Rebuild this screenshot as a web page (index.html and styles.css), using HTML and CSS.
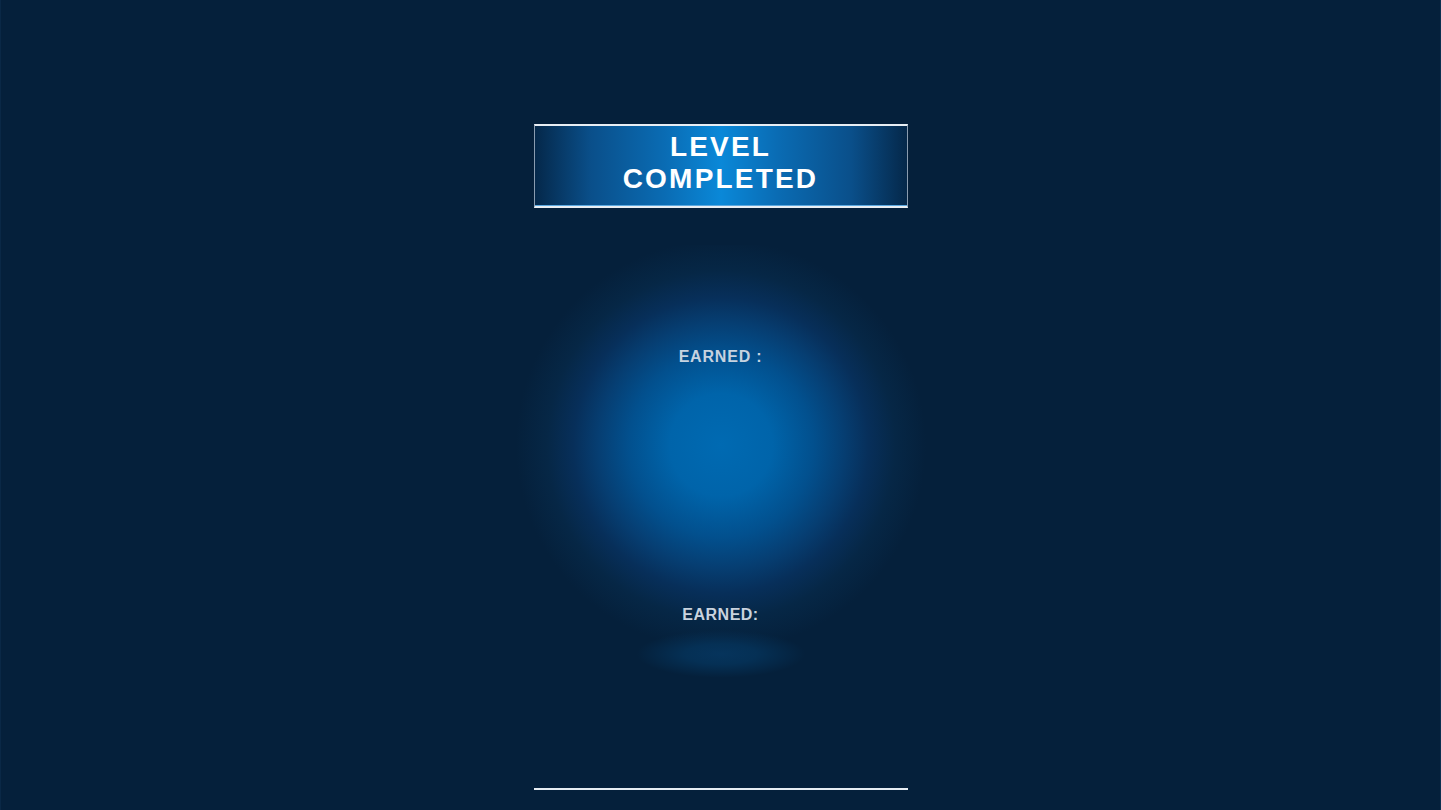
FILE: index.html
```html
<!DOCTYPE html>
<html lang="en">
<head>
    <meta charset="UTF-8">
    <meta name="viewport" content="width=device-width, initial-scale=1.0">
    <title>Level Completed</title>
    <link rel="stylesheet" href="styles.css">
</head>
<body>

    <!-- ======= Result Panel ======= -->
    <main class="result">
        <header class="banner">
            <h1>LEVEL<br>COMPLETED</h1>
        </header>

        <!-- ======= Reward ======= -->
        <section class="reward">
            <p class="reward-label">EARNED :</p>
        </section>

        <!-- ======= Score ======= -->
        <section class="score">
            <p class="score-label">EARNED:</p>
            <div class="score-glow"></div>
        </section>

        <div class="divider"></div>
    </main>

</body>
</html>
```

FILE: styles.css
```css
html, body {
    height: 100%;
}

body {
    font-family: "Liberation Sans", Arial, sans-serif;
    margin: 0;
    background-color: #05203b;
    border-left: 1px solid #0a2846;
    border-right: 1px solid #0c3050;
    box-sizing: border-box;
    overflow: hidden;
}

.result {
    width: 374px;
    margin: 0 auto;
    padding-top: 124px;
    display: flex;
    flex-direction: column;
    align-items: center;
}

.banner {
    width: 100%;
    height: 84px;
    box-sizing: border-box;
    padding-bottom: 6px;
    border-top: 2px solid #e8eef4;
    border-bottom: 2px solid #e8eef4;
    border-left: 1px solid #8a9cb0;
    border-right: 1px solid #8a9cb0;
    box-shadow: inset 0 -1px 0 #5aa8e0;
    background: linear-gradient(to right, #05284a 0%, #0a4f8a 15%, #0a6cb4 35%, #0a88d8 50%, #0a6cb4 65%, #0a4f8a 85%, #05284a 100%);
    display: flex;
    align-items: center;
    justify-content: center;
}

.banner h1 {
    margin: 0;
    color: #ffffff;
    font-size: 28px;
    font-weight: bold;
    line-height: 32px;
    letter-spacing: 2.2px;
    text-align: center;
}

.reward {
    width: 420px;
    height: 400px;
    margin-top: 37px;
    background: radial-gradient(circle 205px at 50% 50%, #006ab2 0%, #0064aa 25%, #02508e 45%, #063e72 60%, #072f5a 72%, #062746 85%, rgba(5, 32, 59, 0) 100%);
    display: flex;
    justify-content: center;
}

.reward-label {
    margin: 103px 0 0;
    color: #c6d3e0;
    font-size: 16px;
    font-weight: bold;
    letter-spacing: 0.8px;
}

.score {
    display: flex;
    flex-direction: column;
    align-items: center;
    margin-top: -39px;
}

.score-label {
    margin: 0;
    color: #c9d3de;
    font-size: 16px;
    font-weight: bold;
    letter-spacing: 0.5px;
}

.score-glow {
    width: 170px;
    height: 48px;
    margin-top: 6px;
    background: radial-gradient(ellipse at 50% 50%, #06345c 0%, #053055 30%, rgba(5, 32, 59, 0) 70%);
}

.divider {
    width: 100%;
    height: 2px;
    margin-top: 110px;
    background-color: #e6ecf2;
}
```
